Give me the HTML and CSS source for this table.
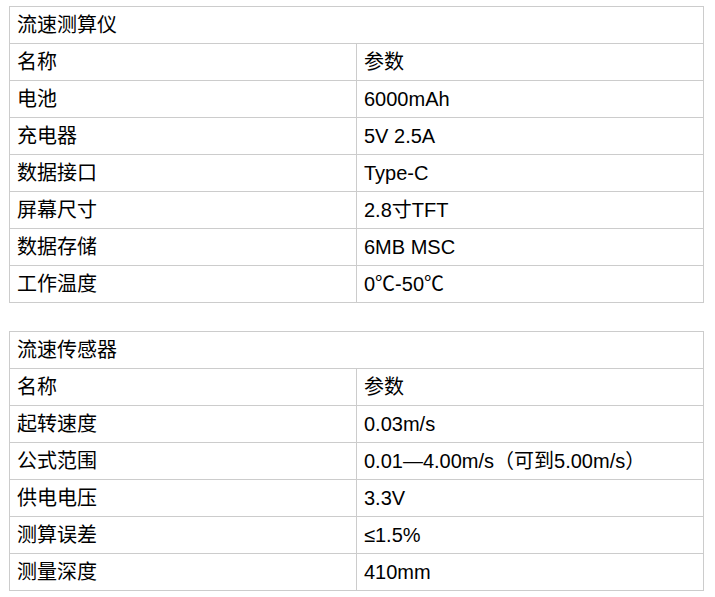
FILE: index.html
```html
<!DOCTYPE html>
<html lang="zh">
<head>
<meta charset="utf-8">
<link rel="stylesheet" href="styles.css">
</head>
<body>
<div class="page">
<table class="spec">
  <colgroup><col class="c1"><col class="c2"></colgroup>
  <tr><td colspan="2">流速测算仪</td></tr>
  <tr><td>名称</td><td>参数</td></tr>
  <tr><td>电池</td><td>6000mAh</td></tr>
  <tr><td>充电器</td><td>5V 2.5A</td></tr>
  <tr><td>数据接口</td><td>Type-C</td></tr>
  <tr><td>屏幕尺寸</td><td>2.8寸TFT</td></tr>
  <tr><td>数据存储</td><td>6MB MSC</td></tr>
  <tr><td>工作温度</td><td>0℃-50℃</td></tr>
</table>
<table class="spec">
  <colgroup><col class="c1"><col class="c2"></colgroup>
  <tr><td colspan="2">流速传感器</td></tr>
  <tr><td>名称</td><td>参数</td></tr>
  <tr><td>起转速度</td><td>0.03m/s</td></tr>
  <tr><td>公式范围</td><td>0.01—4.00m/s（可到5.00m/s）</td></tr>
  <tr><td>供电电压</td><td>3.3V</td></tr>
  <tr><td>测算误差</td><td>≤1.5%</td></tr>
  <tr><td>测量深度</td><td>410mm</td></tr>
</table>
</div>
</body>
</html>
```
FILE: styles.css
```css
html, body {
  margin: 0;
  padding: 0;
  background: #fff;
}
.page {
  padding: 6px 0 0 9px;
  display: flex;
  flex-direction: column;
  gap: 28px;
  align-items: flex-start;
}
.spec {
  border-collapse: collapse;
  width: 695px;
  table-layout: fixed;
  font-family: "Liberation Sans", "Noto Sans CJK SC", sans-serif;
  font-size: 20px;
  color: #000;
}
.spec .c1 { width: 347px; }
.spec td {
  border: 1px solid #cccccc;
  padding: 6px 7px;
  line-height: 24px;
  height: 24px;
  text-align: left;
  vertical-align: middle;
  white-space: nowrap;
}
```
